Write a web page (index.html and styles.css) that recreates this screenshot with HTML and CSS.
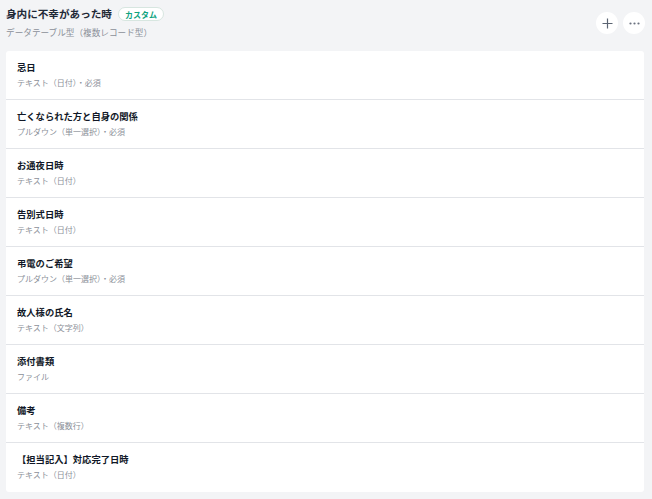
FILE: index.html
```html
<!DOCTYPE html>
<html lang="ja">
<head>
    <meta charset="UTF-8">
    <title>身内に不幸があった時</title>
    <link rel="stylesheet" href="styles.css">
</head>
<body>
    <div class="page">
        <div class="header">
            <div class="header-text">
                <h1 class="title">身内に不幸があった時<span class="badge">カスタム</span></h1>
                <p class="subtitle">データテーブル型（複数レコード型）</p>
            </div>
            <div class="actions">
                <button class="circle-btn" title="追加">
                    <svg width="11" height="11" viewBox="0 0 11 11"><path d="M5.5 0.5v10M0.5 5.5h10" stroke="#5b6472" stroke-width="1.2" fill="none"/></svg>
                </button>
                <button class="circle-btn" title="その他">
                    <svg width="11" height="3" viewBox="0 0 11 3"><circle cx="1.5" cy="1.5" r="1.1" fill="#6b7280"/><circle cx="5.5" cy="1.5" r="1.1" fill="#6b7280"/><circle cx="9.5" cy="1.5" r="1.1" fill="#6b7280"/></svg>
                </button>
            </div>
        </div>

        <div class="card">
            <div class="row"><div class="row-title">忌日</div><div class="row-meta">テキスト（日付）・必須</div></div>
            <div class="row"><div class="row-title">亡くなられた方と自身の関係</div><div class="row-meta">プルダウン（単一選択）・必須</div></div>
            <div class="row"><div class="row-title">お通夜日時</div><div class="row-meta">テキスト（日付）</div></div>
            <div class="row"><div class="row-title">告別式日時</div><div class="row-meta">テキスト（日付）</div></div>
            <div class="row"><div class="row-title">弔電のご希望</div><div class="row-meta">プルダウン（単一選択）・必須</div></div>
            <div class="row"><div class="row-title">故人様の氏名</div><div class="row-meta">テキスト（文字列）</div></div>
            <div class="row"><div class="row-title">添付書類</div><div class="row-meta">ファイル</div></div>
            <div class="row"><div class="row-title">備考</div><div class="row-meta">テキスト（複数行）</div></div>
            <div class="row"><div class="row-title">【担当記入】対応完了日時</div><div class="row-meta">テキスト（日付）</div></div>
        </div>
    </div>
</body>
</html>
```
FILE: styles.css
```css
*{
    padding:0;
    margin:0;
    box-sizing:border-box;
}
body{
    background-color:#f3f4f6;
    font-family:"Noto Sans CJK JP", "Noto Sans", sans-serif;
    color:#111827;
}
.page{
    padding:6px 8px 8px 6px;
}
.header{
    display:flex;
    justify-content:space-between;
    align-items:flex-start;
    height:45px;
}
.title{
    display:flex;
    align-items:center;
    font-size:10.6px;
    font-weight:700;
    line-height:16px;
    color:#1f2937;
}
.badge{
    margin-left:6px;
    padding:0 6px;
    height:14px;
    line-height:13px;
    border:1px solid #d7e6e0;
    border-radius:7px;
    background-color:#fff;
    color:#10a37f;
    font-size:8px;
    font-weight:700;
}
.subtitle{
    margin-top:4px;
    font-size:8.65px;
    line-height:12px;
    color:#8b9099;
}
.actions{
    display:flex;
    gap:5px;
    padding-top:6px;
    margin-right:-1px;
}
.circle-btn{
    width:22px;
    height:22px;
    border:none;
    border-radius:50%;
    background-color:#fff;
    display:flex;
    align-items:center;
    justify-content:center;
}
.card{
    background-color:#fff;
    border-radius:3px;
}
.row{
    height:49px;
    padding:9px 11px 0;
    border-bottom:1px solid #e2e4e8;
}
.row:last-child{
    border-bottom:none;
}
.row-title{
    font-size:9.3px;
    font-weight:700;
    line-height:14px;
    color:#111827;
}
.row-meta{
    margin-top:3px;
    font-size:8px;
    line-height:12px;
    color:#8b9099;
}
```
